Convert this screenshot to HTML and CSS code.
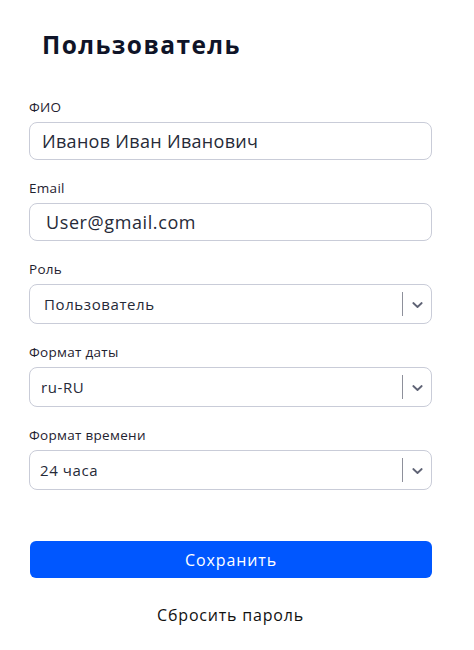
FILE: index.html
```html
<!DOCTYPE html>
<html lang="ru">
<head>
<meta charset="utf-8">
<link rel="stylesheet" href="styles.css">
</head>
<body>
<div class="page">
  <h1 class="title">Пользователь</h1>
  <form class="form">
    <div class="field">
      <div class="label">ФИО</div>
      <div class="input input-name">Иванов Иван Иванович</div>
    </div>
    <div class="field">
      <div class="label">Email</div>
      <div class="input input-email">User@gmail.com</div>
    </div>
    <div class="field">
      <div class="label">Роль</div>
      <div class="select">
        <span class="select-value sv-role">Пользователь</span>
        <span class="select-ind"><span class="sep"></span><svg class="chev" width="11" height="8" viewBox="0 0 11 8"><path d="M1.3 2 L5.5 6 L9.7 2" fill="none" stroke="#5f6375" stroke-width="1.8" stroke-linecap="round" stroke-linejoin="round"/></svg></span>
      </div>
    </div>
    <div class="field">
      <div class="label">Формат даты</div>
      <div class="select">
        <span class="select-value sv-date">ru-RU</span>
        <span class="select-ind"><span class="sep"></span><svg class="chev" width="11" height="8" viewBox="0 0 11 8"><path d="M1.3 2 L5.5 6 L9.7 2" fill="none" stroke="#5f6375" stroke-width="1.8" stroke-linecap="round" stroke-linejoin="round"/></svg></span>
      </div>
    </div>
    <div class="field">
      <div class="label">Формат времени</div>
      <div class="select">
        <span class="select-value sv-time">24 часа</span>
        <span class="select-ind"><span class="sep"></span><svg class="chev" width="11" height="8" viewBox="0 0 11 8"><path d="M1.3 2 L5.5 6 L9.7 2" fill="none" stroke="#5f6375" stroke-width="1.8" stroke-linecap="round" stroke-linejoin="round"/></svg></span>
      </div>
    </div>
    <button type="button" class="btn-save">Сохранить</button>
    <div class="reset">Сбросить пароль</div>
  </form>
</div>
</body>
</html>
```
FILE: styles.css
```css
* { box-sizing: border-box; }
html, body { margin: 0; padding: 0; background: #ffffff; }
body {
  font-family: "Open Sans", "Noto Sans", "DejaVu Sans", sans-serif;
  color: #1d2130;
}
.page {
  width: 474px;
  padding: 28px 0 0 29px;
}
.title {
  margin: 0 0 36px 13px;
  font-size: 24.5px;
  line-height: 34px;
  font-weight: 700;
  color: #0f1428;
  letter-spacing: 1.4px;
}
.form {
  width: 403px;
  display: flex;
  flex-direction: column;
}
.field {
  display: flex;
  flex-direction: column;
  margin-bottom: 19px;
}
.label {
  font-size: 13.5px;
  line-height: 18px;
  margin-bottom: 6px;
  color: #1f2230;
  letter-spacing: 0.3px;
}
.input {
  height: 38px;
  border: 1px solid #c9ccd8;
  border-radius: 8px;
  display: flex;
  align-items: center;
  font-size: 18px;
  color: #262a38;
  padding-left: 12px;
  letter-spacing: 0.3px;
}
.input-email { padding-left: 16px; letter-spacing: 0.6px; }
.select {
  height: 40px;
  border: 1px solid #c9ccd8;
  border-radius: 8px;
  display: flex;
  align-items: center;
  justify-content: space-between;
}
.select-value {
  font-size: 15px;
  color: #262a38;
  padding-left: 14px;
  letter-spacing: 0.6px;
}
.sv-date { padding-left: 11px; }
.sv-time { padding-left: 10px; }
.select-ind {
  display: flex;
  align-items: center;
  height: 100%;
}
.sep {
  width: 1px;
  height: 24px;
  background: #8e909b;
}
.chev {
  margin: 1px 8px 0 9px;
}
.btn-save {
  margin-top: 32px;
  height: 37px;
  width: 402px;
  margin-left: 1px;
  border: none;
  border-radius: 6px;
  background: #0057ff;
  color: #ffffff;
  font-family: inherit;
  font-size: 16px;
  letter-spacing: 0.9px;
  padding: 0;
}
.reset {
  margin-top: 26px;
  text-align: center;
  font-size: 16px;
  color: #111111;
  letter-spacing: 0.8px;
}
```
